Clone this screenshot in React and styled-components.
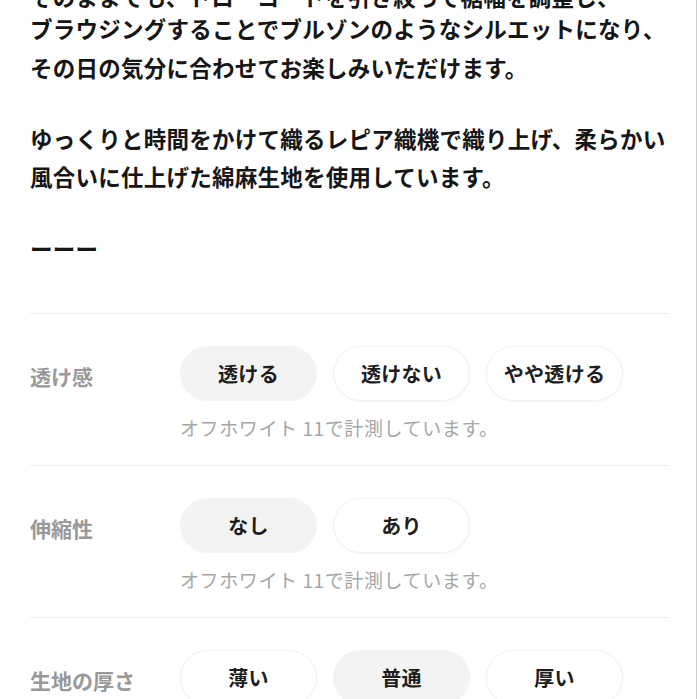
import React from "react";
import styled, { createGlobalStyle } from "styled-components";

const Global = createGlobalStyle`
  html, body { margin: 0; padding: 0; background: #fff; }
  body {
    font-family: "Noto Sans CJK JP", "Noto Sans", sans-serif;
    color: #161616;
    overflow: hidden;
  }
`;

const Page = styled.div`
  width: 697px;
  height: 699px;
  border-right: 1px solid #cfcfcf;
  padding: 0 27px 0 30px;
  box-sizing: border-box;
  overflow: hidden;
`;

const Paragraph = styled.p`
  margin: ${(p) => p.$mt}px 0 0;
  font-size: 22.5px;
  font-weight: 700;
  letter-spacing: 0.25px;
  white-space: nowrap;
  color: #161616;
`;

const Line = styled.span`
  display: block;
  line-height: ${(p) => p.$lh || 38.5}px;
`;

const Spacer = styled.div`
  height: 46px;
`;

const Section = styled.section`
  border-top: 1px solid #efefef;
  padding: 32px 0 25px;
`;

const Row = styled.div`
  display: flex;
  align-items: center;
`;

const Label = styled.div`
  width: 150px;
  flex: none;
  font-size: 21px;
  font-weight: 700;
  color: #999999;
  padding-top: 5px;
  white-space: nowrap;
`;

const Options = styled.div`
  display: flex;
  gap: 16px;
`;

const Pill = styled.button`
  width: 137px;
  height: 55px;
  border-radius: 28px;
  border: 1px solid ${(p) => (p.$active ? "#f3f3f3" : "#f0f0f0")};
  background: ${(p) => (p.$active ? "#f3f3f3" : "#ffffff")};
  box-shadow: ${(p) => (p.$active ? "none" : "0 1px 2px rgba(0,0,0,0.035)")};
  font-family: inherit;
  font-size: 20px;
  font-weight: 600;
  color: #1e1e1e;
  padding: 0;
  letter-spacing: 0.3px;
`;

const Note = styled.div`
  margin: 15px 0 0 150px;
  font-size: 19px;
  line-height: 24px;
  letter-spacing: 0.6px;
  color: #a6a6a6;
  white-space: nowrap;
`;

const specs = [
  { label: "透け感", options: ["透ける", "透けない", "やや透ける"], active: 0 },
  { label: "伸縮性", options: ["なし", "あり"], active: 0 },
  { label: "生地の厚さ", options: ["薄い", "普通", "厚い"], active: 1 },
];

export default function App() {
  return (
    <>
      <Global />
      <Page>
        <Paragraph $mt={-16}>
          <Line $lh={25}>そのままでも、ドローコードを引き絞って裾幅を調整し、</Line>
          <Line>ブラウジングすることでブルゾンのようなシルエットになり、</Line>
          <Line>その日の気分に合わせてお楽しみいただけます。</Line>
        </Paragraph>
        <Paragraph $mt={32.5}>
          <Line>ゆっくりと時間をかけて織るレピア織機で織り上げ、柔らかい</Line>
          <Line>風合いに仕上げた綿麻生地を使用しています。</Line>
        </Paragraph>
        <Paragraph $mt={33}>
          <Line>ーーー</Line>
        </Paragraph>
        <Spacer />
        {specs.map((s) => (
          <Section key={s.label}>
            <Row>
              <Label>{s.label}</Label>
              <Options>
                {s.options.map((o, i) => (
                  <Pill key={o} $active={i === s.active}>
                    {o}
                  </Pill>
                ))}
              </Options>
            </Row>
            <Note>オフホワイト 11で計測しています。</Note>
          </Section>
        ))}
      </Page>
    </>
  );
}
